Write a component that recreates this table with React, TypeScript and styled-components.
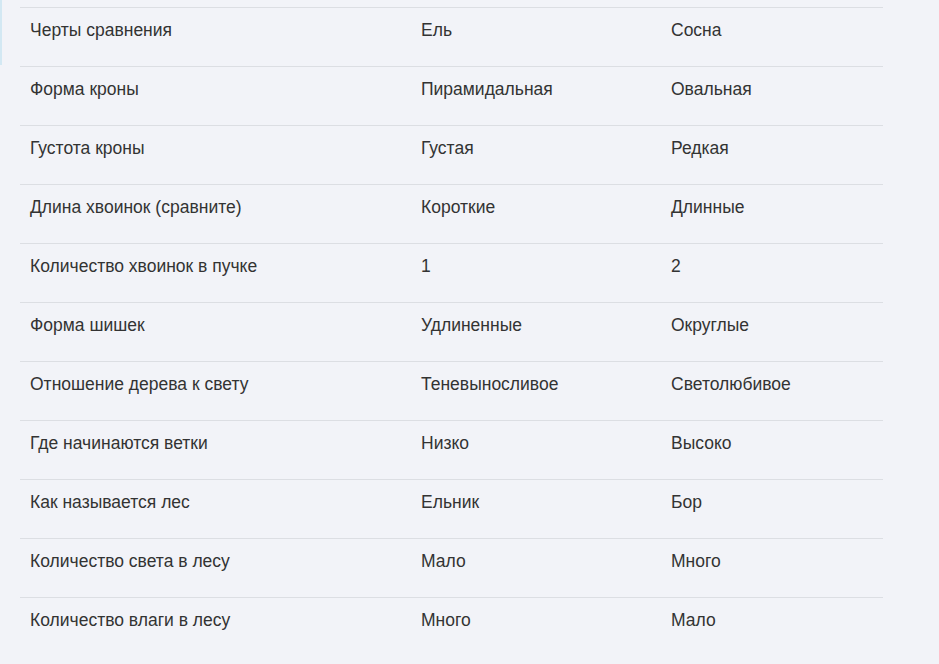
import React from "react";
import styled, { createGlobalStyle } from "styled-components";

const Global = createGlobalStyle`
  html, body {
    margin: 0;
    padding: 0;
    background: #f2f3f8;
  }
  body {
    font-family: "Liberation Sans", Arial, sans-serif;
    color: #333333;
  }
`;

const Page = styled.div`
  display: flex;
  align-items: flex-start;
  width: 939px;
  height: 664px;
  overflow: hidden;
  background: #f2f3f8;
`;

const FocusBar = styled.div`
  flex: 0 0 2px;
  height: 65px;
  background: #d3e8f3;
`;

const TableWrap = styled.div`
  padding: 7px 0 0 18px;
`;

const Table = styled.table`
  border-collapse: collapse;
  width: 863px;
  table-layout: fixed;
  font-size: 17.5px;
`;

const Row = styled.tr`
  border-top: 1px solid #dcdee3;
`;

const Cell = styled.td<{ $w: number }>`
  width: ${(p) => p.$w}px;
  height: 59px;
  box-sizing: border-box;
  padding: 12px 10px 0;
  vertical-align: top;
  line-height: 20px;
  color: #333333;
`;

const rows: [string, string, string][] = [
  ["Черты сравнения", "Ель", "Сосна"],
  ["Форма кроны", "Пирамидальная", "Овальная"],
  ["Густота кроны", "Густая", "Редкая"],
  ["Длина хвоинок (сравните)", "Короткие", "Длинные"],
  ["Количество хвоинок в пучке", "1", "2"],
  ["Форма шишек", "Удлиненные", "Округлые"],
  ["Отношение дерева к свету", "Теневыносливое", "Светолюбивое"],
  ["Где начинаются ветки", "Низко", "Высоко"],
  ["Как называется лес", "Ельник", "Бор"],
  ["Количество света в лесу", "Мало", "Много"],
  ["Количество влаги в лесу", "Много", "Мало"],
];

const widths = [391, 250, 222];

export default function App() {
  return (
    <>
      <Global />
      <Page>
        <FocusBar />
        <TableWrap>
          <Table>
            <tbody>
              {rows.map((r, i) => (
                <Row key={i}>
                  {r.map((c, j) => (
                    <Cell key={j} $w={widths[j]}>
                      {c}
                    </Cell>
                  ))}
                </Row>
              ))}
            </tbody>
          </Table>
        </TableWrap>
      </Page>
    </>
  );
}
